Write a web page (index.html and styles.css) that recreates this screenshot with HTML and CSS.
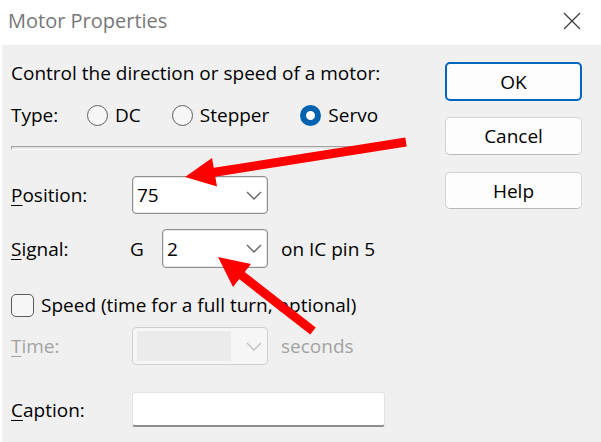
FILE: index.html
```html
<!DOCTYPE html>
<html lang="en">

<head>
    <meta charset="UTF-8">
    <title>Motor Properties</title>
    <link rel="stylesheet" href="styles.css">
</head>

<body>
    <div class="dialog">
        <div class="titlebar">
            <span class="title">Motor Properties</span>
            <svg class="close" width="18" height="18" viewBox="0 0 18 18">
                <path d="M1 1 L17 17 M17 1 L1 17" stroke="#3a3a3a" stroke-width="1.2" fill="none" />
            </svg>
        </div>

        <div class="content">
            <div class="form">
                <div class="intro">Control the direction or speed of a motor:</div>

                <!-- motor type -->
                <div class="type-row">
                    <span class="type-label">Type:</span>
                    <span class="option"><span class="radio"></span>DC</span>
                    <span class="option"><span class="radio"></span>Stepper</span>
                    <span class="option"><span class="radio checked"></span>Servo</span>
                </div>

                <div class="track"></div>

                <div class="row row-position">
                    <span class="label"><u>P</u>osition:</span>
                    <span class="combo wide">
                        <span>75</span>
                        <svg width="16" height="9" viewBox="0 0 16 9"><path d="M1 1 L8 8 L15 1" stroke="#666" stroke-width="1.4" fill="none" /></svg>
                    </span>
                </div>

                <div class="row row-signal">
                    <span class="label short"><u>S</u>ignal:</span>
                    <span class="port">G</span>
                    <span class="combo narrow">
                        <span>2</span>
                        <svg width="16" height="9" viewBox="0 0 16 9"><path d="M1 1 L8 8 L15 1" stroke="#666" stroke-width="1.4" fill="none" /></svg>
                    </span>
                    <span class="suffix">on IC pin 5</span>
                </div>

                <div class="check-row">
                    <span class="checkbox"></span>
                    <span>Speed (time for a full turn, optional)</span>
                </div>

                <div class="row row-time disabled">
                    <span class="label"><u>T</u>ime:</span>
                    <span class="combo wide off">
                        <span class="field"></span>
                        <svg width="16" height="9" viewBox="0 0 16 9"><path d="M1 1 L8 8 L15 1" stroke="#c2c2c2" stroke-width="1.4" fill="none" /></svg>
                    </span>
                    <span class="suffix">seconds</span>
                </div>

                <div class="row row-caption">
                    <span class="label"><u>C</u>aption:</span>
                    <span class="textbox"></span>
                </div>
            </div>

            <div class="buttons">
                <div class="btn default">OK</div>
                <div class="btn">Cancel</div>
                <div class="btn help">Help</div>
            </div>
        </div>

        <!-- red annotation arrows -->
        <svg class="arrows" width="601" height="442" viewBox="0 0 601 442">
            <line x1="406" y1="142" x2="213" y2="172.5" stroke="#fe0000" stroke-width="9" />
            <polygon points="185,177 217,186.5 212,158" fill="#fe0000" />
            <line x1="313" y1="331" x2="240" y2="274" stroke="#fe0000" stroke-width="9" />
            <polygon points="218,257 233,287 251,264" fill="#fe0000" />
        </svg>
    </div>
</body>

</html>
```

FILE: styles.css
```css
body {
    margin: 0;
    font-family: "Open Sans", sans-serif;
    font-size: 19px;
    color: #000;
}

.dialog {
    position: relative;
    width: 601px;
    height: 442px;
    background: #fff;
    overflow: hidden;
}

.titlebar {
    height: 45px;
    box-sizing: border-box;
    padding: 0 20px 4px 8px;
    display: flex;
    align-items: center;
    justify-content: space-between;
}

.title {
    font-size: 20px;
    color: #777;
}

.content {
    margin-left: 2px;
    height: 397px;
    background: #f0f0f0;
    display: flex;
}

.form {
    flex: 1;
    padding-left: 9px;
    display: flex;
    flex-direction: column;
}

.intro {
    margin-top: 14px;
    line-height: 28px;
}

.type-row {
    margin-top: 14px;
    height: 28px;
    display: flex;
    align-items: center;
}

.type-label {
    width: 76px;
}

.option {
    display: flex;
    align-items: center;
    gap: 7px;
    margin-right: 31px;
}

.radio {
    width: 21px;
    height: 21px;
    box-sizing: border-box;
    border-radius: 50%;
    border: 1.5px solid #5f5f5f;
    background: #f7f7f7;
}

.radio.checked {
    border: 6.5px solid #0063b1;
    background: #fff;
}

.track {
    margin-top: 17px;
    width: 378px;
    height: 4px;
    box-sizing: border-box;
    border: 1px solid #a0a0a0;
    border-right-color: #fff;
    border-bottom-color: #fff;
    background: #e6e6e6;
}

.row {
    display: flex;
    align-items: center;
}

.row-position {
    margin-top: 26px;
    height: 38px;
}

.row-signal {
    margin-top: 15px;
    height: 39px;
}

.row-time {
    margin-top: 8px;
    height: 38px;
}

.row-caption {
    margin-top: 27px;
    height: 35px;
}

.label {
    width: 121px;
}

.label.short {
    width: 119px;
}

u {
    text-underline-offset: 3px;
}

.port {
    width: 32px;
}

.combo {
    box-sizing: border-box;
    height: 100%;
    border: 1px solid #8f8f8f;
    border-radius: 4px;
    background: #fff;
    box-shadow: inset 0 0 0 1px #e6e6e6;
    display: flex;
    align-items: center;
    justify-content: space-between;
    padding: 0 5px 0 4px;
}

.combo.wide {
    width: 136px;
}

.combo.narrow {
    width: 106px;
}

.combo.off {
    border-color: #d0d0d0;
    background: #f6f6f6;
    box-shadow: none;
}

.field {
    width: 94px;
    height: 30px;
    background: #ebebeb;
}

.suffix {
    margin-left: 13px;
}

.disabled {
    color: #a3a3a3;
}

.check-row {
    margin-top: 23px;
    height: 28px;
    display: flex;
    align-items: center;
    gap: 7px;
}

.checkbox {
    width: 23px;
    height: 23px;
    box-sizing: border-box;
    border: 1.5px solid #5a5a5a;
    border-radius: 5px;
    background: #f6f6f6;
}

.textbox {
    width: 253px;
    height: 35px;
    box-sizing: border-box;
    background: #fff;
    border: 1px solid #e2e2e2;
    border-bottom: 2px solid #8d8d8d;
    border-radius: 3px;
}

.buttons {
    width: 137px;
    margin: 17px 19px 0 0;
    display: flex;
    flex-direction: column;
}

.btn {
    height: 38px;
    box-sizing: border-box;
    border: 1px solid #d3d3d3;
    border-bottom-color: #b9b9b9;
    border-radius: 5px;
    background: #fdfdfd;
    display: flex;
    align-items: center;
    justify-content: center;
    margin-bottom: 17px;
}

.btn.default {
    height: 39px;
    border: 2px solid #0067c0;
    margin-bottom: 16px;
}

.btn.help {
    height: 37px;
}

.arrows {
    position: absolute;
    left: 0;
    top: 0;
    pointer-events: none;
}
```
